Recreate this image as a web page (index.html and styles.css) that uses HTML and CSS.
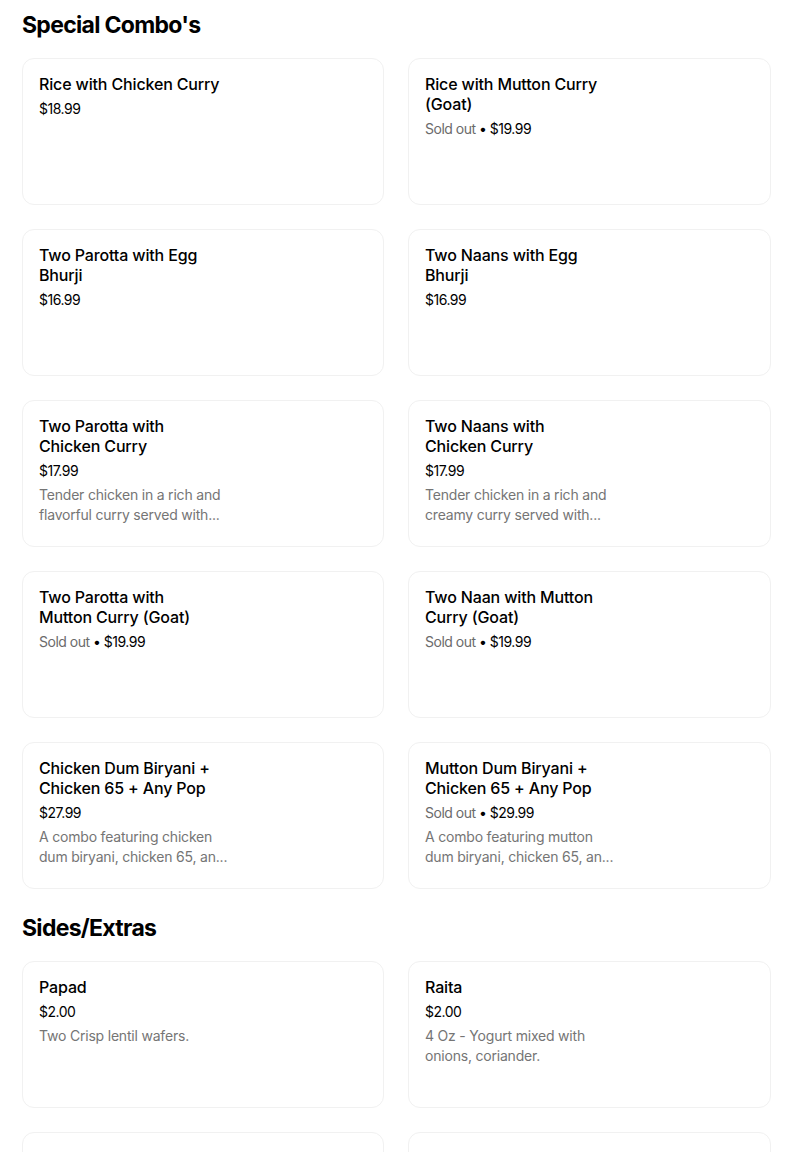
FILE: index.html
```html
<!DOCTYPE html>
<html lang="en">
<head>
<meta charset="utf-8">
<title>Menu</title>
<link rel="stylesheet" href="styles.css">
</head>
<body>
<main class="menu">
  <section class="section">
    <h2 class="section-title">Special Combo's</h2>
    <div class="grid">
      <div class="card"><div class="info">
        <div class="name">Rice with Chicken Curry</div>
        <div class="price">$18.99</div>
      </div></div>
      <div class="card"><div class="info">
        <div class="name">Rice with Mutton Curry<br>(Goat)</div>
        <div class="price"><span class="sold">Sold out</span> • $19.99</div>
      </div></div>
      <div class="card"><div class="info">
        <div class="name">Two Parotta with Egg<br>Bhurji</div>
        <div class="price">$16.99</div>
      </div></div>
      <div class="card"><div class="info">
        <div class="name">Two Naans with Egg<br>Bhurji</div>
        <div class="price">$16.99</div>
      </div></div>
      <div class="card"><div class="info">
        <div class="name">Two Parotta with<br>Chicken Curry</div>
        <div class="price">$17.99</div>
        <div class="desc">Tender chicken in a rich and<br>flavorful curry served with...</div>
      </div></div>
      <div class="card"><div class="info">
        <div class="name">Two Naans with<br>Chicken Curry</div>
        <div class="price">$17.99</div>
        <div class="desc">Tender chicken in a rich and<br>creamy curry served with...</div>
      </div></div>
      <div class="card"><div class="info">
        <div class="name">Two Parotta with<br>Mutton Curry (Goat)</div>
        <div class="price"><span class="sold">Sold out</span> • $19.99</div>
      </div></div>
      <div class="card"><div class="info">
        <div class="name">Two Naan with Mutton<br>Curry (Goat)</div>
        <div class="price"><span class="sold">Sold out</span> • $19.99</div>
      </div></div>
      <div class="card"><div class="info">
        <div class="name">Chicken Dum Biryani +<br>Chicken 65 + Any Pop</div>
        <div class="price">$27.99</div>
        <div class="desc">A combo featuring chicken<br>dum biryani, chicken 65, an...</div>
      </div></div>
      <div class="card"><div class="info">
        <div class="name">Mutton Dum Biryani +<br>Chicken 65 + Any Pop</div>
        <div class="price"><span class="sold">Sold out</span> • $29.99</div>
        <div class="desc">A combo featuring mutton<br>dum biryani, chicken 65, an...</div>
      </div></div>
    </div>
  </section>
  <section class="section">
    <h2 class="section-title">Sides/Extras</h2>
    <div class="grid">
      <div class="card"><div class="info">
        <div class="name">Papad</div>
        <div class="price">$2.00</div>
        <div class="desc">Two Crisp lentil wafers.</div>
      </div></div>
      <div class="card"><div class="info">
        <div class="name">Raita</div>
        <div class="price">$2.00</div>
        <div class="desc">4 Oz - Yogurt mixed with<br>onions, coriander.</div>
      </div></div>
      <div class="card"></div>
      <div class="card"></div>
    </div>
  </section>
</main>
</body>
</html>
```

FILE: styles.css
```css
* { box-sizing: border-box; }
html, body {
  margin: 0;
  padding: 0;
  background: #ffffff;
  color: #000000;
  font-family: Inter, "Noto Sans", "Liberation Sans", sans-serif;
}
.menu {
  width: 750px;
  margin-left: 22px;
  padding-top: 9px;
  display: flex;
  flex-direction: column;
  gap: 23px;
}
.section {
  display: flex;
  flex-direction: column;
  gap: 17px;
}
.section-title {
  margin: 0;
  font-size: 23px;
  line-height: 32px;
  font-weight: 700;
  letter-spacing: -0.7px;
}
.grid {
  display: grid;
  grid-template-columns: 362px 363px;
  column-gap: 24px;
  row-gap: 24px;
}
.card {
  height: 147px;
  border: 1px solid #f1f1f1;
  border-radius: 12px;
  padding: 15px 16px;
}
.info {
  width: 190px;
  display: flex;
  flex-direction: column;
}
.name {
  font-size: 16px;
  line-height: 20px;
  font-weight: 500;
  letter-spacing: -0.15px;
}
.price {
  margin-top: 5px;
  font-size: 14px;
  line-height: 20px;
  font-weight: 400;
  letter-spacing: -0.5px;
}
.sold { color: #6b6b6b; }
.desc {
  margin-top: 4px;
  font-size: 14px;
  line-height: 20px;
  color: #757575;
  letter-spacing: -0.2px;
}
```
